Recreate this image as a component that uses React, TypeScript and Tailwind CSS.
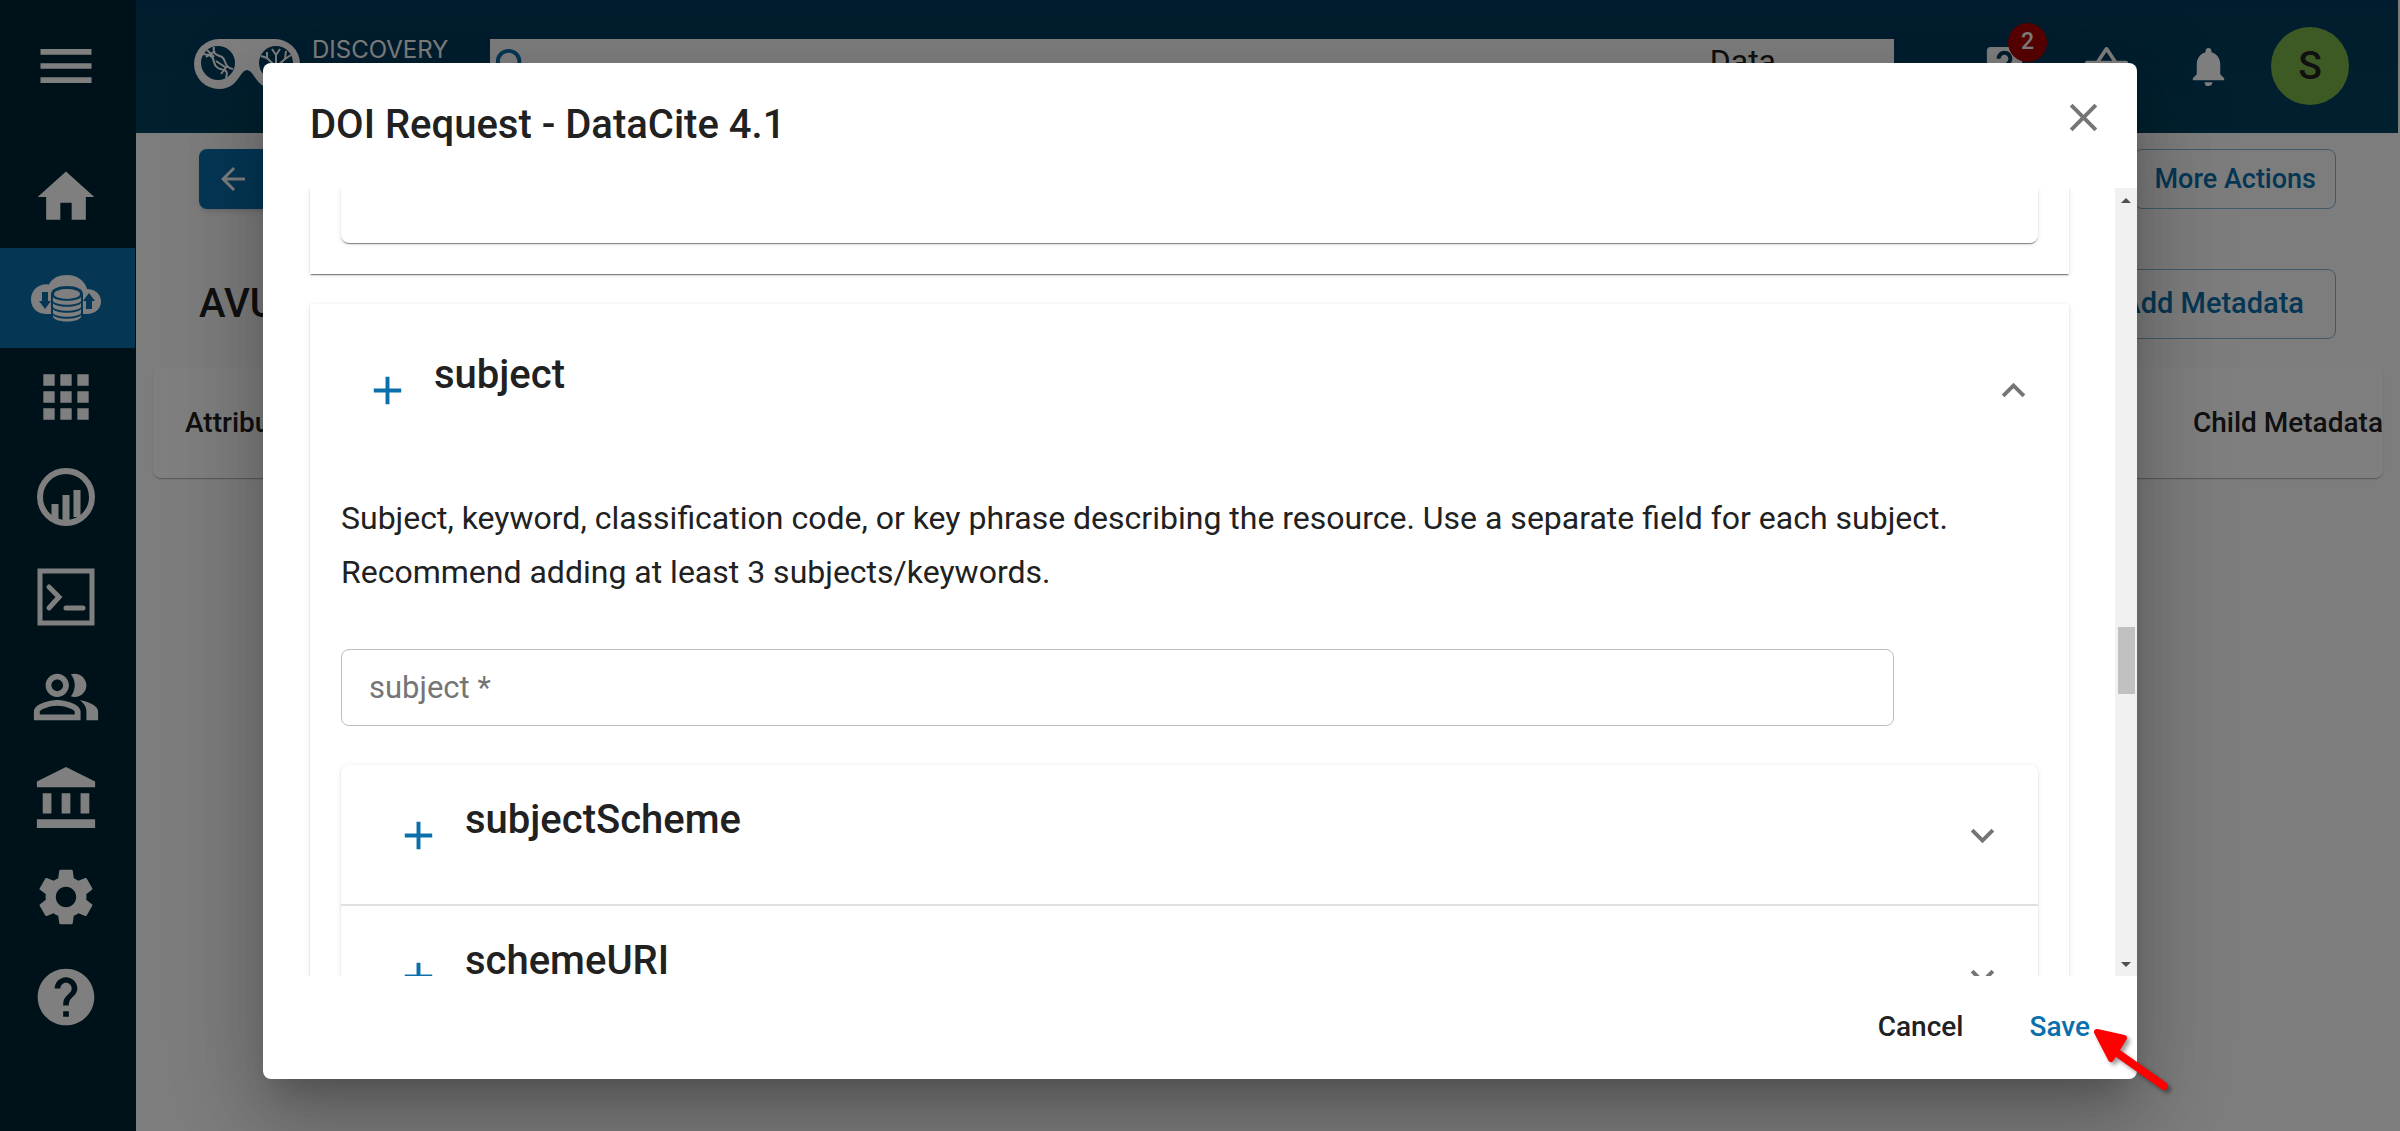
import React from 'react';
import {
  MdAdd,
  MdApps,
  MdArrowBack,
  MdClose,
  MdExpandLess,
  MdExpandMore,
  MdHelp,
  MdLiveHelp,
  MdMenu,
  MdNotifications,
  MdOutlinePeopleAlt,
  MdSearch,
  MdSettings,
  MdShoppingBasket,
} from 'react-icons/md';

const ICONS = {
  Home: () => (
    <svg viewBox="0 0 24 24" className="size-[68px]" fill="currentColor">
      <path d="M10 20v-6h4v6h5v-8h3L12 3 2 12h3v8z" />
    </svg>
  ),
  Data: () => (
    <svg viewBox="0 0 70 48" className="h-12 w-[70px]" fill="currentColor">
      <path d="M16 40C6 40 0 34 0 25.500 0 16 8 9 18 10.500 21 4 28 1 36 1c10 0 18 6 20 14 8 0 14 5 14 12.500C70 35 64 40 56 40z" />
      <path d="M20 20c0-5 7-8 16-8s16 3 16 8v28H20z" className="text-[#0a6fab]" />
      <path d="M11 18h6v9h3l-6 8-6-8h3zM55 35h6v-8h3l-6-8-6 8h3z" className="text-[#0a6fab]" />
      <ellipse cx="36" cy="20" rx="13" ry="5" />
      <path d="M22 23c3 5 25 5 28 0v4c-3 5-25 5-28 0zM22 29c3 5 25 5 28 0v4c-3 5-25 5-28 0zM22 35c3 5 25 5 28 0v4c-3 5-25 5-28 0zM22 41c3 5 25 5 28 0v2c-3 6-25 6-28 0z" />
    </svg>
  ),
  Analyses: () => (
    <svg viewBox="0 0 60 60" className="size-[60px]" fill="none" stroke="currentColor">
      <circle cx="30" cy="30" r="26" strokeWidth="6" />
      <path d="M19 37v15M30 28v26M41 23v27" strokeWidth="7" />
    </svg>
  ),
  Terminal: () => (
    <svg viewBox="0 0 58 58" className="size-[58px]" fill="none" stroke="currentColor" strokeWidth="5">
      <path d="M3 3h52v52H3z" />
      <path d="m12 19 10 10-10 11M29 40h17" strokeLinecap="round" />
    </svg>
  ),
  Bank: () => (
    <svg viewBox="0 0 24 23" className="h-[67px] w-[70px]" fill="currentColor">
      <path d="M4 10h3v7H4zm6.500 0h3v7h-3zM2 19h20v3H2zm15-9h3v7h-3zm-5-9L2 6v2h20V6z" />
    </svg>
  ),
};

const navItems = [
  { label: 'Home', icon: <ICONS.Home /> },
  { label: 'Data', icon: <ICONS.Data />, active: true },
  { label: 'Apps', icon: <MdApps size={68} /> },
  { label: 'Analyses', icon: <ICONS.Analyses /> },
  { label: 'Cloud Shell', icon: <ICONS.Terminal /> },
  { label: 'Teams', icon: <MdOutlinePeopleAlt size={70} /> },
  { label: 'Collections', icon: <ICONS.Bank /> },
  { label: 'Settings', icon: <MdSettings size={68} /> },
  { label: 'Help', icon: <MdHelp size={68} /> },
];

const Sidebar: React.FC = () => (
  <nav className="w-[136px] shrink-0 bg-[#002433] text-white">
    <button aria-label="Menu" className="flex h-[148px] w-[132px] items-start justify-center pt-8">
      <MdMenu size={68} />
    </button>
    {navItems.map((item) => (
      <a
        key={item.label}
        href="#"
        aria-label={item.label}
        className={`flex w-[135px] items-center justify-center pr-1 ${item.active ? 'h-[100px] bg-[#0a6fab]' : 'h-[98px] mb-[2px]'}`}
      >
        {item.icon}
      </a>
    ))}
  </nav>
);

const Logo: React.FC = () => (
  <svg viewBox="0 0 106 50" className="h-[50px] w-[106px] text-[#023e5f]" fill="currentColor">
    <path
      className="text-white"
      d="M25 0h56a25 25 0 0 1 0 50c-12 0-17-7-21-13-5-8-9-8-14 0-4 6-9 13-21 13a25 25 0 0 1 0-50z"
    />
    <circle cx="24" cy="24" r="17" />
    <circle cx="82" cy="24" r="17" />
    <g fill="none" stroke="#fff" strokeWidth="2">
      <path d="M20 8c-2 8 4 8 8 10s2 11 11 12M9 15c8 1 10 2 11 8s6 7 10 8 3 5 2 8M13 11l7 7M21 12l-9 6M22 22l9 6M33 27l-6 8" />
      <path d="M82 41V28l-9-9M82 28l9-8 1-8M73 19v-6M73 19l-6-2M82 26V14M91 20l6-4M78 10l4 6 4-6" />
    </g>
  </svg>
);

const TopBar: React.FC = () => (
  <header className="mr-[2px] flex h-[133px] items-start bg-linear-to-b from-[#02395c] to-[#02425f] pr-[49px] pl-[58px] text-white">
    <div className="flex w-[296px] gap-3 pt-[39px]">
      <Logo />
      <span className="font-[Inter,sans-serif] text-2xl leading-[22px]">DISCOVERY</span>
    </div>
    <div className="mt-[39px] flex h-[50px] flex-1 items-start justify-between bg-white pt-1 pr-[118px] text-[#0a6fab]">
      <MdSearch size={47} />
      <span className="text-[32px] leading-9 text-[#212121]">Data</span>
    </div>
    <div className="ml-[87px] flex h-[132px] items-center gap-[55px]">
      <button aria-label="Help requests" className="relative">
        <MdLiveHelp size={47} />
        <span className="absolute -top-5 left-[27px] flex size-[39px] items-center justify-center rounded-full bg-[#b00000] text-[23px] font-medium">
          2
        </span>
      </button>
      <button aria-label="Bag">
        <MdShoppingBasket size={47} />
      </button>
      <button aria-label="Notifications">
        <MdNotifications size={47} />
      </button>
      <button className="-ml-4 flex size-[78px] items-center justify-center rounded-full bg-[#7ab548] text-[39px] font-medium text-[#212121]">
        S
      </button>
    </div>
  </header>
);

const Page: React.FC = () => (
  <div className="min-w-0 flex-1 bg-[#fafafa]">
    <TopBar />
    <div className="flex items-center justify-between pt-4 pr-16 pl-[63px]">
      <button className="flex h-[60px] items-center gap-3 rounded-lg bg-[#0a6fab] px-4 text-[27px] font-medium text-white shadow-md">
        <MdArrowBack size={36} />
        Back
      </button>
      <button className="h-[60px] rounded-lg border border-[#0a6fab]/50 px-[19px] text-[27px] font-medium text-[#0a6fab]">
        More Actions
      </button>
    </div>
    <div className="mt-[60px] flex items-center justify-between pr-16 pl-[63px]">
      <h1 className="text-[40px] font-medium text-[#212121]">AVUs</h1>
      <button className="h-[70px] rounded-lg border border-[#0a6fab]/50 px-[31px] text-[29px] font-medium text-[#0a6fab]">
        Add Metadata
      </button>
    </div>
    <div className="mt-7 mr-[17px] ml-[17px] rounded-lg bg-white shadow-[0_2px_1px_-1px_#00000033,0_1px_2px_0_#00000024]">
      <table className="h-[111px] w-full text-[28px] text-[#212121]">
        <thead>
          <tr>
            <th className="pl-8 text-left font-medium">Attribute</th>
            <th className="text-left font-medium">Value</th>
            <th className="text-left font-medium">Unit</th>
            <th className="text-right font-medium">Child Metadata</th>
          </tr>
        </thead>
      </table>
    </div>
  </div>
);

type PanelHeaderProps = {
  title: string;
  nested?: boolean;
  expanded?: boolean;
};

const PanelHeader: React.FC<PanelHeaderProps> = ({ title, nested, expanded }) => (
  <div className={`flex items-center justify-between pr-8 pl-[31px] ${nested ? 'pt-6 pb-[22px]' : 'py-10'}`}>
    <div className="flex items-start">
      <button aria-label={`Add ${title}`} className="p-[23px] text-[#0a6fab]">
        <MdAdd size={47} />
      </button>
      <h3 className="text-[40px] leading-[62px] font-medium">{title}</h3>
    </div>
    <button aria-label={`Toggle ${title}`} aria-expanded={!!expanded} className="text-[#757575]">
      {expanded ? <MdExpandLess size={47} /> : <MdExpandMore size={47} />}
    </button>
  </div>
);

const cardShadow = 'shadow-[0_2px_1px_-1px_#00000066,0_1px_2px_0_#00000024,0_1px_6px_0_#00000014]';

const ScrollBar: React.FC = () => (
  <div className="flex w-[22px] shrink-0 flex-col items-center bg-[#f1f1f1] text-[#505050]">
    <svg viewBox="0 0 22 24" className="h-6 w-[22px]" fill="currentColor">
      <path d="M6 15h10l-5-5z" />
    </svg>
    <div className="grow-[414]" />
    <div className="h-[67px] w-[17px] bg-[#c1c1c1]" />
    <div className="grow-[258]" />
    <svg viewBox="0 0 22 24" className="h-6 w-[22px]" fill="currentColor">
      <path d="M6 10h10l-5 5z" />
    </svg>
  </div>
);

const RequestDialog: React.FC = () => (
  <div
    role="dialog"
    aria-labelledby="dialog-title"
    className="relative flex w-full max-w-[1874px] flex-col rounded-lg bg-white text-[#212121] shadow-[0_22px_30px_-14px_#00000033,0_48px_76px_6px_#00000024,0_18px_92px_16px_#0000001f]"
  >
    <div className="flex h-[125px] shrink-0 items-start justify-between pt-[31px] pr-[30px] pl-[47px]">
      <h2 id="dialog-title" className="text-[40px] leading-[62px] font-medium">
        DOI Request - DataCite 4.1
      </h2>
      <button aria-label="Close" className="text-[#757575]">
        <MdClose size={47} />
      </button>
    </div>

    <div className="flex min-h-0 flex-1">
      <div className="min-w-0 flex-1 overflow-hidden pr-[46px] pl-[47px]">
        <div className={`px-[31px] pb-[31px] ${cardShadow}`}>
          <div className={`h-[55px] rounded-b-lg ${cardShadow}`} />
        </div>

        <div className={`mt-[30px] ${cardShadow}`}>
          <PanelHeader title="subject" expanded />
          <div className="px-[31px] pt-[14px] pb-8">
            <p className="text-[32px] leading-[54px]">
              Subject, keyword, classification code, or key phrase describing the resource. Use a separate field for each
              subject.
              <br />
              Recommend adding at least 3 subjects/keywords.
            </p>
            <label htmlFor="subject" className="sr-only">
              subject
            </label>
            <input
              id="subject"
              type="text"
              required
              placeholder="subject *"
              className="mt-[50px] block h-[77px] w-[91.5%] rounded-lg border border-[#bdbdbd] px-[27px] text-[31px] placeholder:text-[#757575]"
            />
            <div className={`mt-[39px] rounded-lg ${cardShadow}`}>
              <PanelHeader title="subjectScheme" nested />
              <div className="border-t-2 border-[#e0e0e0]">
                <PanelHeader title="schemeURI" nested />
              </div>
            </div>
          </div>
        </div>
      </div>
      <ScrollBar />
    </div>

    <div className="flex h-[103px] shrink-0 items-center justify-end gap-[66px] pr-[47px] pb-[2px] text-[28px] font-medium">
      <button>Cancel</button>
      <button className="text-[#0a6fab]">Save</button>
    </div>

    {/* pointer to the Save button */}
    <svg viewBox="0 0 90 80" className="absolute -right-[42px] -bottom-[25px] h-20 w-[90px] drop-shadow-[3px_3px_2px_#00000066]">
      <path d="m24 26 51 36" stroke="red" strokeWidth="8" strokeLinecap="round" />
      <path d="m8 8 27 6-13 21z" fill="red" stroke="red" strokeWidth="6" strokeLinejoin="round" />
    </svg>
  </div>
);

const App: React.FC = () => (
  <div className="relative flex h-screen overflow-hidden font-[Roboto,sans-serif]">
    <Sidebar />
    <Page />
    <div className="absolute inset-0 flex justify-center bg-black/50 pt-[63px] pb-[52px]">
      <RequestDialog />
    </div>
  </div>
);

export default App;
